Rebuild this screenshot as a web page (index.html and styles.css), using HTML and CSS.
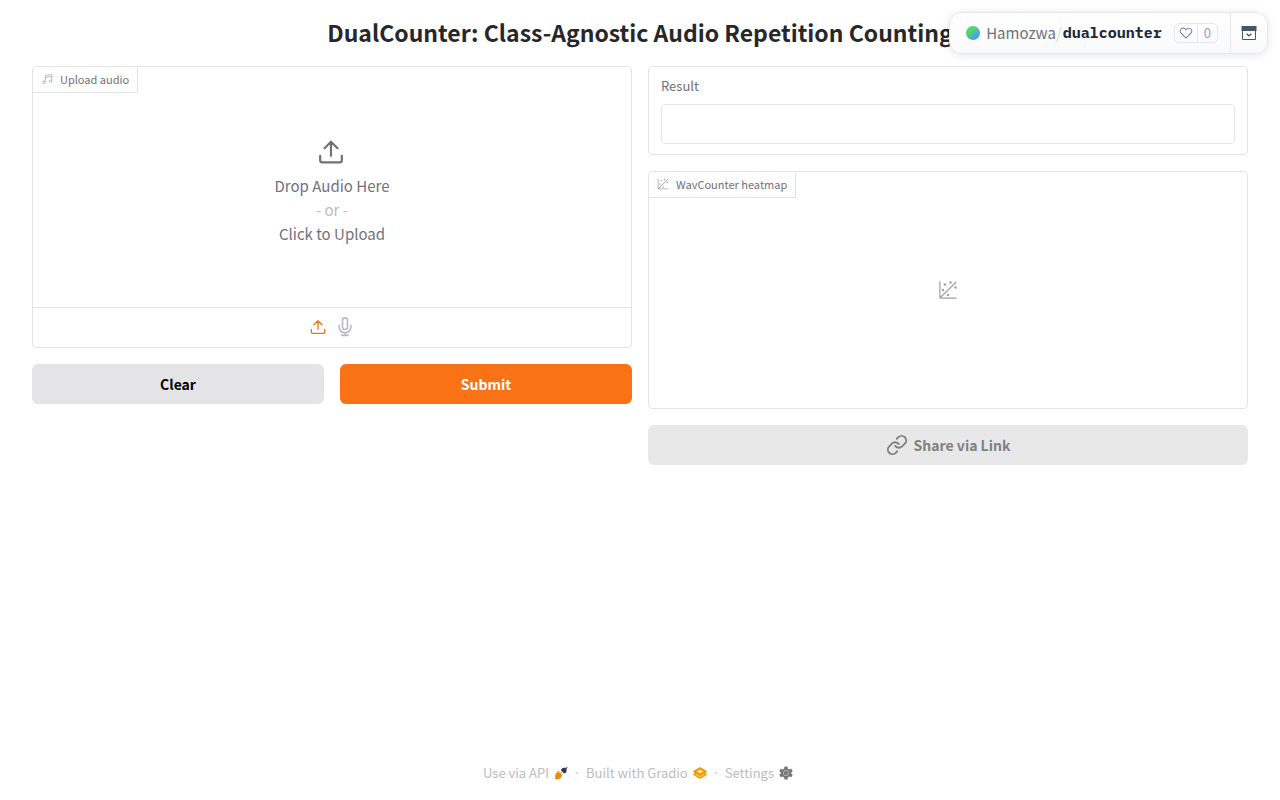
FILE: index.html
```html
<!DOCTYPE html>
<html lang="en">
<head>
<meta charset="utf-8">
<meta name="viewport" content="width=device-width, initial-scale=1">
<title>DualCounter</title>
<link rel="stylesheet" href="styles.css">
</head>
<body>
<svg width="0" height="0" class="defs" aria-hidden="true">
  <defs>
    <symbol id="upload" viewBox="0 0 24 24"><path d="M12 15.500V2.500M6 8.500l6-6 6 6M2 15.500v4a2 2 0 0 0 2 2h16a2 2 0 0 0 2-2v-4" fill="none" stroke="currentColor" stroke-width="2" stroke-linecap="round" stroke-linejoin="round"/></symbol>
    <symbol id="plot" viewBox="0 0 32 32"><g fill="currentColor"><circle cx="20" cy="4" r="2"/><circle cx="8" cy="16" r="2"/><circle cx="28" cy="12" r="2"/><circle cx="11" cy="7" r="2"/><circle cx="16" cy="24" r="2"/><path d="M30 3.413 28.586 2 4 26.585V2H2v26a2 2 0 0 0 2 2h26v-2H5.413Z"/></g></symbol>
  </defs>
</svg>
<header class="space-card">
  <div class="space-info">
    <span class="avatar"></span>
    <a class="owner" href="#">Hamozwa</a><span class="slash">/</span><a class="repo" href="#">dualcounter</a>
    <div class="likes">
      <button class="like" aria-label="Like"><svg width="14" height="14" viewBox="0 0 32 32" fill="currentColor"><path d="M22.450 6a5.470 5.470 0 0 1 3.910 1.640 5.700 5.700 0 0 1 0 8L16 26.130 5.640 15.640a5.700 5.700 0 0 1 0-8 5.480 5.480 0 0 1 7.820 0L16 10.240l2.530-2.580A5.440 5.440 0 0 1 22.450 6m0-2a7.470 7.470 0 0 0-5.340 2.240L16 7.360l-1.110-1.120a7.490 7.490 0 0 0-10.680 0 7.720 7.720 0 0 0 0 10.820L16 29l11.790-11.940a7.720 7.720 0 0 0 0-10.820A7.490 7.490 0 0 0 22.450 4Z"/></svg></button>
      <button class="count">0</button>
    </div>
  </div>
  <button class="collapse" aria-label="Collapse"><svg width="16" height="16" viewBox="0 0 16 16"><path d="M1.500 1.500h13v13h-13z" fill="#fff" stroke="#475569"/><path d="M.5 1h15v5H.5z" fill="#475569"/><path d="m5.700 8.700 2.300 2.200 2.300-2.200" fill="none" stroke="#374963" stroke-width="1.300"/></svg></button>
</header>
<main class="page">
  <h1>DualCounter: Class-Agnostic Audio Repetition Counting</h1>
  <div class="columns">
    <section class="column">
      <div class="panel">
        <div class="tag"><svg width="12" height="12" viewBox="0 0 24 24" fill="none" stroke="currentColor" stroke-width="1.500"><path d="M8.500 18V5l13-2v13M8.500 9l13-2"/><circle cx="6" cy="18.500" r="2.500"/><circle cx="19" cy="16.500" r="2.500"/></svg><span>Upload audio</span></div>
        <button class="drop">
          <svg width="26" height="26"><use href="#upload"/></svg>
          <span>Drop Audio Here</span><span class="or">- or -</span><span>Click to Upload</span>
        </button>
        <div class="sources">
          <button class="source active" aria-label="Upload file"><svg width="16" height="16"><use href="#upload"/></svg></button>
          <button class="source" aria-label="Record audio"><svg width="20" height="20" viewBox="0 0 24 24" fill="none" stroke="currentColor" stroke-width="2" stroke-linecap="round" stroke-linejoin="round"><path d="M12 1a3 3 0 0 0-3 3v8a3 3 0 0 0 6 0V4a3 3 0 0 0-3-3ZM19 10v2a7 7 0 0 1-14 0v-2M12 19v3M8 22h8"/></svg></button>
        </div>
      </div>
      <div class="actions"><button class="btn">Clear</button><button class="btn primary">Submit</button></div>
    </section>
    <section class="column">
      <div class="panel result"><label for="result">Result</label><input id="result" type="text"></div>
      <div class="panel">
        <div class="tag"><svg width="12" height="12"><use href="#plot"/></svg><span>WavCounter heatmap</span></div>
        <div class="empty"><svg width="20" height="20"><use href="#plot"/></svg></div>
      </div>
      <button class="btn share" disabled><svg width="22" height="22" viewBox="0 0 24 24" fill="none" stroke="currentColor" stroke-width="2" stroke-linecap="round" stroke-linejoin="round"><path d="M10 13a5 5 0 0 0 7.540.54l3-3a5 5 0 0 0-7.070-7.070l-1.720 1.710M14 11a5 5 0 0 0-7.540-.54l-3 3a5 5 0 0 0 7.070 7.070l1.710-1.710"/></svg>Share via Link</button>
    </section>
  </div>
  <footer class="footer">
    <button>Use via API <svg width="14" height="14" viewBox="0 0 28 28"><path d="m26 2-3 2c-3-1-6 0-8 2l-1 3 6 6 3-1c2-2 3-5 2-8l2-3Z" fill="#35375a"/><path d="m9 10-5 5c-2 3-2 6-1 8l-2 4 4-1c3 1 6 0 8-2l4-5-3-3 2-3-2-1-2 3-2-2 2-2Z" fill="#f08705"/></svg></button>
    <span class="dot">·</span>
    <a href="#">Built with Gradio <svg width="14" height="14" viewBox="0 0 28 28" fill="none" stroke-linejoin="round"><path d="m2 17 12 7 12-7-12-7Z" fill="#ffd98a" stroke="#ff9d00" stroke-width="3"/><path d="m2 11 12-7 12 7-12 7Z" fill="#ffb52e" stroke="#f59300" stroke-width="3"/><path d="m9 11 5-3 5 3-5 3Z" fill="#fff2cf"/></svg></a>
    <span class="dot">·</span>
    <button>Settings <svg width="14" height="14" viewBox="0 0 24 24"><path d="M9.500 1h5l.8 3.500 2.400 1.300 3.500-1 2.300 4-2.500 2.400v1.600l2.500 2.400-2.300 4-3.500-1-2.400 1.300-.8 3.500h-5l-.8-3.500-2.400-1.300-3.500 1-2.300-4L3 12.800v-1.600L.5 8.800l2.300-4 3.500 1 2.400-1.300Z" fill="#777"/><circle cx="12" cy="12" r="4.500" fill="none" stroke="#bbb" stroke-width="1.500"/></svg></button>
  </footer>
</main>
</body>
</html>
```

FILE: styles.css
```css
* { box-sizing: border-box; }
body {
  margin: 0;
  color: #27272a;
  background: #fff;
  font: 14px/24px "Source Sans Pro", "Noto Sans CJK SC", sans-serif;
}
button, input { font: inherit; color: inherit; }
button { padding: 0; border: 0; background: none; cursor: pointer; }
a { color: inherit; text-decoration: none; }
svg { display: block; flex: none; }
.defs { position: absolute; }

.page {
  display: flex;
  flex-direction: column;
  min-height: 100vh;
  padding: 16px 32px;
}
h1 {
  margin: 0 0 18px;
  font-size: 23px;
  line-height: 32px;
  font-weight: 700;
  text-align: center;
}
.columns { display: flex; gap: 16px; flex: 1; align-items: flex-start; }
.column { display: flex; flex-direction: column; gap: 16px; flex: 1; min-width: 0; }
.panel {
  position: relative;
  border: 1px solid #e4e4e7;
  border-radius: 4px;
}
.tag {
  position: absolute;
  top: 0;
  left: 0;
  display: flex;
  align-items: center;
  gap: 7px;
  height: 26px;
  padding: 0 8px 2px;
  border: solid #e4e4e7;
  border-width: 0 1px 1px 0;
  color: #71717a;
  font-size: 11px;
}
.tag svg { color: #a1a1aa; }
.drop {
  display: flex;
  flex-direction: column;
  align-items: center;
  width: 100%;
  padding: 72px 0 61px;
  color: #71717a;
  font-size: 15px;
}
.drop svg { margin: 0 3px 9px 0; }
.or { color: #bbbbc2; }
.sources {
  display: flex;
  justify-content: center;
  align-items: center;
  gap: 9px;
  height: 40px;
  padding-bottom: 2px;
  border-top: 1px solid #e4e4e7;
  color: #bbbbc2;
}
.source.active { color: #f97316; }
.actions { display: flex; gap: 16px; }
.btn {
  flex: 1;
  padding: 8px;
  border-radius: 6px;
  background: #e4e4e7;
  color: #000;
  font-weight: 700;
}
.btn.primary { background: #f97316; color: #fff; }
.btn.share {
  display: flex;
  justify-content: center;
  align-items: center;
  gap: 6px;
  background: #e8e8e8;
  color: #808080;
}
.result { display: flex; flex-direction: column; gap: 6px; padding: 7px 12px 10px; }
.result label { color: #71717a; font-size: 13px; }
.result input {
  width: 100%;
  height: 40px;
  padding: 8px;
  border: 1px solid #e4e4e7;
  border-radius: 4px;
  background: #fff;
}
.empty { display: flex; justify-content: center; padding: 108px 0; color: #a1a1aa; }

.footer {
  display: flex;
  justify-content: center;
  margin-top: 16px;
  padding-right: 4px;
  line-height: 22px;
  color: #bbbbc2;
  font-size: 13px;
}
.footer button, .footer a { display: flex; align-items: center; gap: 5px; }
.dot { width: 18px; font-family: "Open Sans", sans-serif; text-align: center; }

.space-card {
  position: absolute;
  z-index: 2;
  top: 12px;
  right: 12px;
  display: flex;
  height: 42px;
  border: 1px solid #e5e7eb;
  border-radius: 12px;
  background: linear-gradient(#fff, #f9fafb);
  box-shadow: 0 1px 8px #0000001a;
}
.space-info { display: flex; align-items: center; padding: 0 12px 0 16px; }
.avatar {
  width: 14px;
  height: 14px;
  margin-right: 6px;
  border-radius: 50%;
  background: linear-gradient(135deg, #53d769 35%, #4c9df5 75%);
}
.owner { color: #6b7280; font-size: 15px; }
.slash { color: #d1d5db; font-size: 15px; }
.repo { padding-left: 1px; color: #1f2937; font: bold 15px/24px "IBM Plex Mono", "Liberation Mono", monospace; }
.likes {
  display: flex;
  height: 20px;
  margin-left: 12px;
  border: 1px solid #e5e7eb;
  border-radius: 5px;
  color: #6b7280;
}
.like { display: flex; align-items: center; padding: 0 4px; }
.count { padding: 0 6px; border-left: 1px solid #e5e7eb; color: #9ca3af; font-size: 13px; line-height: 18px; }
.collapse { display: grid; place-items: center; width: 37px; border-left: 1px solid #e5e7eb; }
```
